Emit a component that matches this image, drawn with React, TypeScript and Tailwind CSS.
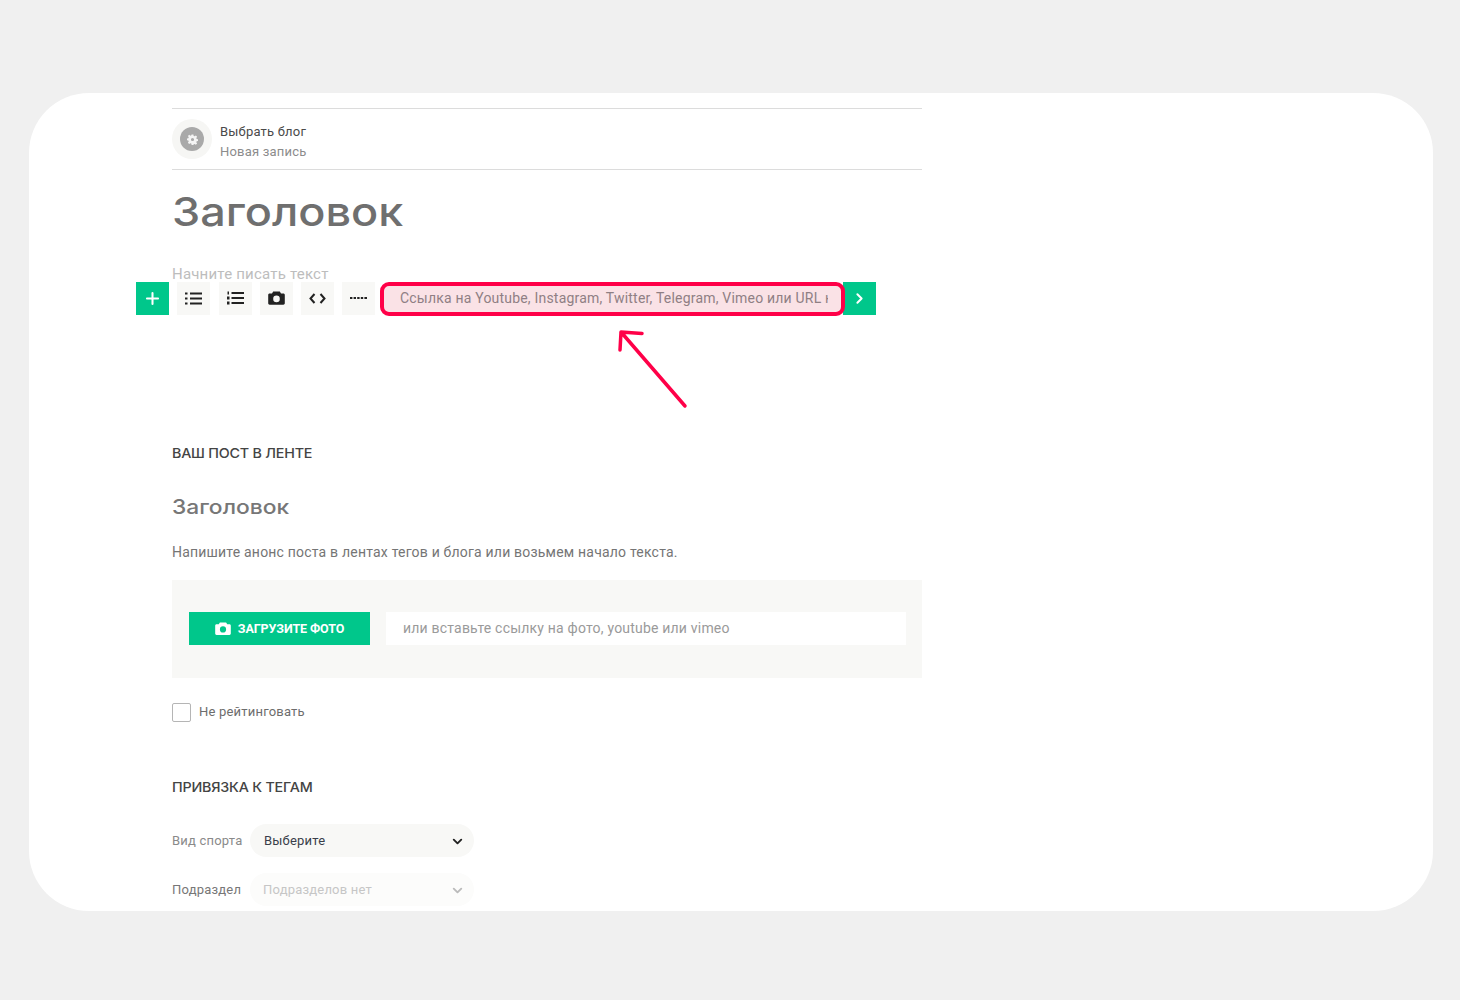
import React from "react";
import { ChevronDown, ChevronRight, Plus } from "lucide-react";

const Cam = ({ w = 18, color = "#222" }: { w?: number; color?: string }) => (
  <svg width={w} height={(w * 14) / 17} viewBox="0 0 17 14">
    <path fillRule="evenodd" fill={color} d="M5.2 0.6h6.6l1.2 1.9h2.4c.8 0 1.4.6 1.4 1.4v8.4c0 .8-.6 1.4-1.4 1.4H1.6c-.8 0-1.4-.6-1.4-1.4V3.900c0-.8.6-1.4 1.4-1.4H4zM8.500 4.600a3.300 3.300 0 1 0 0 6.600 3.300 3.300 0 0 0 0-6.600z" />
  </svg>
);

const ToolBtn = ({ children }: { children: React.ReactNode }) => (
  <div className="w-[33px] h-[33px] bg-[#f8f8f6] flex items-center justify-center pb-[1px]">{children}</div>
);

export default function App() {
  return (
    <div className="w-[1460px] h-[1000px] bg-[#f0f0f0] pt-[93px] pl-[29px] font-['Roboto',sans-serif] tracking-[0.2px] overflow-hidden">
      <div className="w-[1404px] h-[818px] bg-white rounded-[60px] pl-[143px] pt-[15px] overflow-hidden">
        <div className="w-[750px]">
          <div className="border-t border-b border-[#dcdcdc] h-[62px] flex items-center gap-[8px]">
            <div className="w-[40px] h-[40px] rounded-full bg-[#f6f6f4] flex items-center justify-center">
              <div className="w-[24px] h-[24px] rounded-full bg-[#a9a9a9] flex items-center justify-center">
                <svg width="11" height="11" viewBox="0 0 24 24" fill="#f4f4f4">
                  <path fillRule="evenodd" d="M10 1h4l.6 3.2 2 .8 2.7-1.800 2.800 2.800-1.800 2.700.8 2 3 .6v4l-3 .6-.8 2 1.800 2.700-2.800 2.800-2.700-1.800-2 .8L14 24h-4l-.6-3.200-2-.8-2.700 1.800-2.800-2.800 1.800-2.700-.8-2L0 13.900v-4l3-.6.8-2L2 4.600l2.800-2.800 2.700 1.800 2-.8zM12 8.500a3.500 3.500 0 1 0 0 7 3.500 3.500 0 0 0 0-7z" />
                </svg>
              </div>
            </div>
            <div className="flex flex-col text-[13px] leading-[20px] mt-[5px]">
              <span className="text-[#4a4a4a]">Выбрать блог</span>
              <span className="text-[#8c8c8c]">Новая запись</span>
            </div>
          </div>

          <h1 className="font-['Inter',sans-serif] text-[40px] leading-[48px] font-medium text-[#6f6f6f] mt-[18px] tracking-normal origin-left scale-x-[1.125]">Заголовок</h1>

          <div className="mt-[29px] text-[15px] leading-[18px] text-[#bdbdbd] h-[17px]">Начните писать текст</div>

          <div className="relative ml-[-36px] flex items-center h-[33px] w-[741px] gap-[8.25px]">
            <div className="w-[33px] h-[33px] bg-[#00c78b] flex items-center justify-center pb-[1px]">
              <Plus size={19} color="#fff" strokeWidth={2.6} />
            </div>
            <ToolBtn>
              <svg width="17" height="13" viewBox="0 0 17 13" fill="#222">
                <rect x="0" y="0.500" width="2.500" height="2" /><rect x="5" y="0.500" width="12" height="2" />
                <rect x="0" y="5.500" width="2.500" height="2" /><rect x="5" y="5.500" width="12" height="2" />
                <rect x="0" y="10.500" width="2.500" height="2" /><rect x="5" y="10.500" width="12" height="2" />
              </svg>
            </ToolBtn>
            <ToolBtn>
              <svg width="17" height="14" viewBox="0 0 17 14" fill="#222">
                <rect x="0.500" y="0.500" width="1.500" height="3" /><rect x="4.500" y="1" width="12.500" height="2" />
                <rect x="0" y="5.500" width="2.500" height="3" /><rect x="4.500" y="6" width="12.500" height="2" />
                <rect x="0" y="10.500" width="2.500" height="3" /><rect x="4.500" y="11" width="12.500" height="2" />
              </svg>
            </ToolBtn>
            <ToolBtn><Cam w={17} /></ToolBtn>
            <ToolBtn>
              <svg width="17" height="11" viewBox="0 0 17 11" fill="none" stroke="#222" strokeWidth="2">
                <path d="M5.500 1 1.500 5.500 5.500 10M11.500 1l4 4.500-4 4.500" />
              </svg>
            </ToolBtn>
            <ToolBtn>
              <svg width="17" height="2" viewBox="0 0 17 2" fill="#222">
                <rect x="0" width="2.400" height="2" /><rect x="3.600" width="2.400" height="2" /><rect x="7.200" width="2.400" height="2" /><rect x="10.800" width="2.400" height="2" /><rect x="14.400" width="2.600" height="2" />
              </svg>
            </ToolBtn>
            <div className="relative z-10 w-[465px] h-[34px] ml-[-3.5px] mt-[1px] rounded-[9px] border-[4px] border-[#ff0048] bg-[#fae2e6] flex items-center pl-[16px] pr-[13px] pb-[2px]">
              <span className="min-w-0 text-[14px] text-[#8f7f84] whitespace-nowrap overflow-hidden">Ссылка на Youtube, Instagram, Twitter, Telegram, Vimeo или URL картинки</span>
            </div>
            <div className="w-[33px] h-[33px] bg-[#00c78b] flex items-center justify-center ml-[-10px] pb-[1px]">
              <ChevronRight size={17} color="#fff" strokeWidth={2.8} />
            </div>
            <svg className="absolute left-[476px] top-[45px]" width="76" height="90" viewBox="0 0 76 90" fill="none" stroke="#ff0048" strokeWidth="3.5" strokeLinecap="round">
              <path d="M73 79 9 5M9 5l21 1.500M9 5 8 23" />
            </svg>
          </div>

          <h2 className="font-['Inter',sans-serif] mt-[128px] text-[13.500px] leading-[20px] font-medium text-[#444] tracking-[-0.2px] origin-left scale-x-[1.06]">ВАШ ПОСТ В ЛЕНТЕ</h2>
          <h3 className="font-['Inter',sans-serif] mt-[30px] text-[20px] leading-[28px] font-medium text-[#777] tracking-normal origin-left scale-x-[1.14]">Заголовок</h3>
          <p className="mt-[21px] text-[14px] leading-[20px] text-[#757575]">Напишите анонс поста в лентах тегов и блога или возьмем начало текста.</p>

          <div className="mt-[18px] h-[98px] bg-[#f8f8f6] flex items-center pl-[17px] pr-[16px] pb-[1px] gap-[16px]">
            <div className="w-[181px] h-[33px] bg-[#00c78b] flex items-center justify-center gap-[7px]">
              <Cam w={16} color="#fff" />
              <span className="text-[12.500px] font-bold text-white tracking-[-0.1px] mt-[1px]">ЗАГРУЗИТЕ ФОТО</span>
            </div>
            <div className="flex-1 h-[33px] bg-white flex items-center pl-[17px] text-[14px] text-[#9a9a9a]">или вставьте ссылку на фото, youtube или vimeo</div>
          </div>

          <div className="mt-[24px] flex items-center gap-[8px] h-[20px]">
            <div className="w-[19px] h-[19px] rounded-[2px] border border-[#b5b5b5] bg-white" />
            <span className="text-[13px] text-[#6d6d6d]">Не рейтинговать</span>
          </div>

          <h2 className="font-['Inter',sans-serif] mt-[55px] text-[13.500px] leading-[20px] font-medium text-[#444] tracking-[-0.2px] origin-left scale-x-[1.06]">ПРИВЯЗКА К ТЕГАМ</h2>

          <div className="mt-[27px] flex items-center">
            <span className="text-[13px] text-[#8a8a8a] w-[78px]">Вид спорта</span>
            <div className="w-[224px] h-[33px] rounded-full bg-[#f8f8f6] flex items-center justify-between pl-[14px] pr-[9px]">
              <span className="text-[13px] text-[#3a3f4a]">Выберите</span>
              <ChevronDown size={15} color="#222" strokeWidth={3} className="mt-[2px]" />
            </div>
          </div>
          <div className="mt-[16px] flex items-center">
            <span className="text-[13px] text-[#777] w-[78px]">Подраздел</span>
            <div className="w-[224px] h-[33px] rounded-full bg-[#fcfcfb] flex items-center justify-between pl-[13px] pr-[9px]">
              <span className="text-[13px] text-[#c6c6c6]">Подразделов нет</span>
              <ChevronDown size={15} color="#bbb" strokeWidth={3} className="mt-[2px]" />
            </div>
          </div>
        </div>
      </div>
    </div>
  );
}
